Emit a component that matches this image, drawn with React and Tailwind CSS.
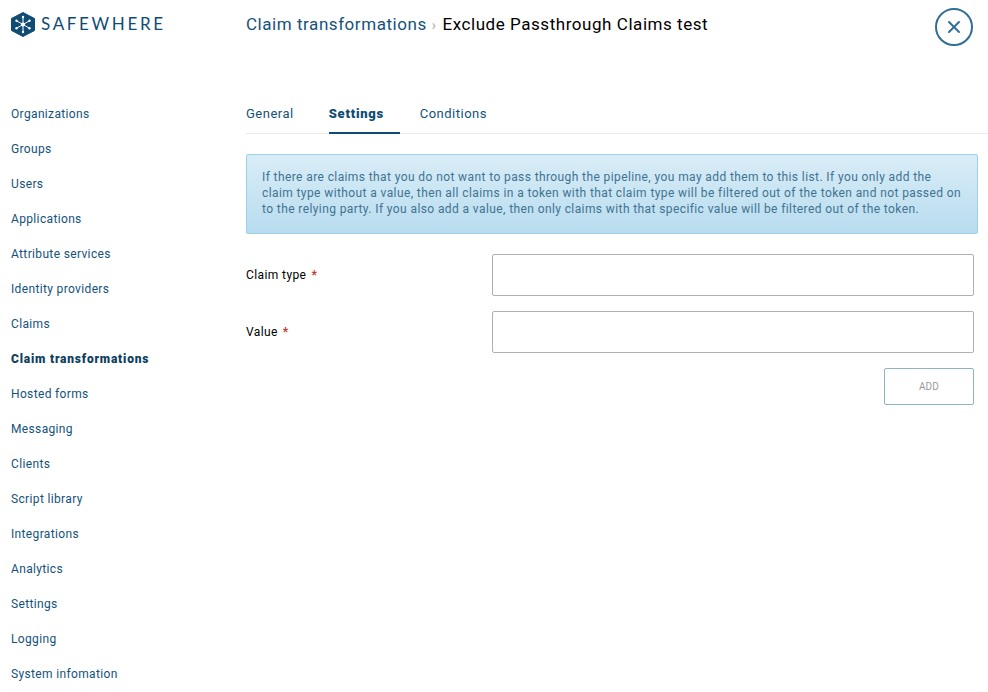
import React from 'react'

const navItems = [
  'Organizations',
  'Groups',
  'Users',
  'Applications',
  'Attribute services',
  'Identity providers',
  'Claims',
  'Claim transformations',
  'Hosted forms',
  'Messaging',
  'Clients',
  'Script library',
  'Integrations',
  'Analytics',
  'Settings',
  'Logging',
  'System infomation',
]

const Logo = () => (
  <svg width="24" height="25" viewBox="0 0 24 25" fill="none">
    <polygon points="12,0.5 23.5,6.5 23.5,18.5 12,24.5 0.5,18.5 0.5,6.5" fill="#0f4c75" strokeLinejoin="round" stroke="#0f4c75" />
    <g stroke="#ffffff" strokeWidth="1" strokeLinecap="round">
      <line x1="12" y1="12.5" x2="12" y2="5" />
      <line x1="12" y1="12.5" x2="12" y2="20" />
      <line x1="12" y1="12.5" x2="5.5" y2="8.8" />
      <line x1="12" y1="12.5" x2="18.5" y2="8.8" />
      <line x1="12" y1="12.5" x2="5.5" y2="16.2" />
      <line x1="12" y1="12.5" x2="18.5" y2="16.2" />
    </g>
    <g fill="#ffffff">
      <circle cx="12" cy="12.5" r="2" />
      <circle cx="12" cy="5" r="1.2" />
      <circle cx="12" cy="20" r="1.2" />
      <circle cx="5.5" cy="8.8" r="1.2" />
      <circle cx="18.5" cy="8.8" r="1.2" />
      <circle cx="5.5" cy="16.2" r="1.2" />
      <circle cx="18.5" cy="16.2" r="1.2" />
    </g>
  </svg>
)

const Field = ({ label }) => (
  <div className="flex items-center h-[42px]">
    <label className="w-[246px] text-[12px] tracking-[0.4px] text-black">
      {label}
      <span className="ml-[5px] font-bold text-[#c0392b]">*</span>
    </label>
    <input className="w-[482px] h-[42px] border border-[#b0b0b0] rounded-[2px] bg-white" />
  </div>
)

export default function App() {
  return (
    <div className="flex w-[988px] h-[692px] overflow-hidden bg-white font-['Roboto',sans-serif]">
      {/* Sidebar */}
      <aside className="w-[246px] shrink-0 pl-[11px]">
        <div className="flex items-start gap-[6px] pt-[12px] h-[96px]">
          <Logo />
          <span className="font-['Lato',sans-serif] text-[17px] leading-[24px] tracking-[2.65px] text-[#0f4c75]">SAFEWHERE</span>
        </div>
        <nav className="flex flex-col">
          {navItems.map((item) => (
            <a
              key={item}
              className={`h-[35px] flex items-center text-[12px] ${
                item === 'Claim transformations' ? 'font-black tracking-[0.8px] text-[#0f3f5f]' : 'tracking-[0.35px] text-[#14527a]'
              }`}
            >
              {item}
            </a>
          ))}
        </nav>
      </aside>

      {/* Main */}
      <main className="flex-1 min-w-0">
        <div className="flex justify-between items-start h-[96px] pr-[15px]">
          <h1 className="pt-[12px] text-[17px] leading-[24px] tracking-[0.55px]">
            <span className="text-[#14527a]">Claim transformations</span>
            <span className="ml-[5px] mr-[6px] text-[#aaa] text-[14px]">›</span>
            <span className="text-black">Exclude Passthrough Claims test</span>
          </h1>
          <button className="mt-[8px] w-[38px] h-[38px] rounded-full border-2 border-[#2f6f96] flex items-center justify-center text-[#2f6f96]">
            <svg width="14" height="14" viewBox="0 0 14 14" fill="none" stroke="currentColor" strokeWidth="2" strokeLinecap="round">
              <line x1="2" y1="2" x2="12" y2="12" />
              <line x1="12" y1="2" x2="2" y2="12" />
            </svg>
          </button>
        </div>

        {/* Tabs */}
        <div className="flex h-[38px] border-b border-[#ececec] text-[13px] tracking-[0.5px]">
          <a className="flex items-center h-[36px] text-[#14527a] mr-[35px]">General</a>
          <a className="flex items-center h-[38px] pb-[1px] w-[71px] font-black tracking-[0.75px] text-[#0f4c75] border-b-2 border-[#0f4c75] mr-[20px]">Settings</a>
          <a className="flex items-center h-[36px] text-[#14527a]">Conditions</a>
        </div>

        {/* Info box */}
        <div className="mt-[20px] w-[732px] h-[80px] px-[15px] py-[14px] rounded-[2px] border border-[#9bd0e8] bg-gradient-to-b from-[#d9edf7] to-[#b8dcef] text-[12px] leading-[16px] tracking-[0.4px] text-[#3f7391]">
          If there are claims that you do not want to pass through the pipeline, you may add them to this list. If you only add the claim type without a value, then all claims in a token with that claim type will be filtered out of the token and not passed on to the relying party. If you also add a value, then only claims with that specific value will be filtered out of the token.
        </div>

        {/* Form */}
        <div className="mt-[20px] flex flex-col gap-[15px]">
          <Field label="Claim type" />
          <Field label="Value" />
        </div>
        <div className="mt-[15px] w-[728px] flex justify-end">
          <button className="w-[90px] h-[37px] border border-[#8fb4c8] rounded-[2px] text-[10px] tracking-[0.2px] text-[#999]">ADD</button>
        </div>
      </main>
    </div>
  )
}
